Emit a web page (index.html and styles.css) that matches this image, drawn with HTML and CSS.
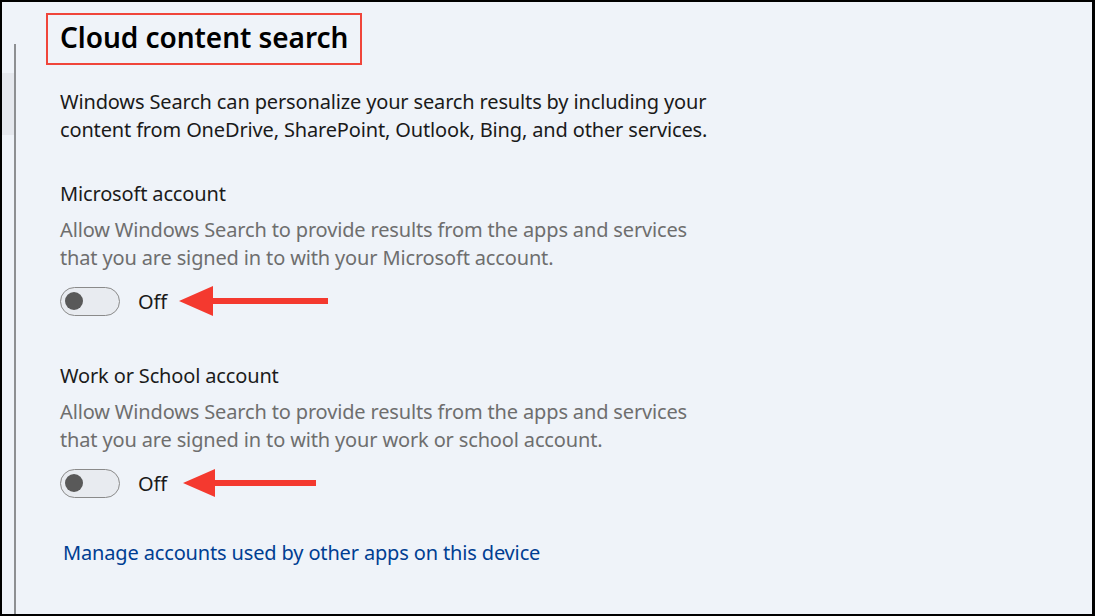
FILE: index.html
```html
<!DOCTYPE html>
<html lang="en">
<head>
<meta charset="utf-8">
<title>Cloud content search</title>
<link rel="stylesheet" href="styles.css">
</head>
<body>
<div class="frame">
  <div class="rail"><div class="rail-highlight"></div></div>
  <div class="divider"></div>
  <main class="content">
    <h1 class="heading">Cloud content search</h1>
    <p class="intro">Windows Search can personalize your search results by including your<br>content from OneDrive, SharePoint, Outlook, Bing, and other services.</p>

    <section class="setting first">
      <h2 class="label">Microsoft account</h2>
      <p class="desc">Allow Windows Search to provide results from the apps and services<br>that you are signed in to with your Microsoft account.</p>
      <div class="toggle-row">
        <span class="toggle"><span class="knob"></span></span>
        <span class="state">Off</span>
        <svg class="arrow a1" width="150" height="32" viewBox="0 0 150 32"><path d="M0 16 L34 1 L34 13 L149 13 L149 19 L34 19 L34 31 Z" fill="#f4392f"/></svg>
      </div>
    </section>

    <section class="setting second">
      <h2 class="label">Work or School account</h2>
      <p class="desc">Allow Windows Search to provide results from the apps and services<br>that you are signed in to with your work or school account.</p>
      <div class="toggle-row">
        <span class="toggle"><span class="knob"></span></span>
        <span class="state">Off</span>
        <svg class="arrow a2" width="134" height="32" viewBox="0 0 134 32"><path d="M0 16 L32 2 L32 13 L133 13 L133 19 L32 19 L32 30 Z" fill="#f4392f"/></svg>
      </div>
    </section>

    <a class="link" href="#">Manage accounts used by other apps on this device</a>
  </main>
</div>
</body>
</html>
```
FILE: styles.css
```css
* { box-sizing: border-box; }
html, body { margin: 0; padding: 0; }
body {
  font-family: "Noto Sans", "Open Sans", sans-serif;
  background: #000;
}
.frame {
  width: 1095px;
  height: 616px;
  border: 2px solid #000;
  border-right-width: 3px;
  background: #eff3f9;
  display: flex;
  overflow: hidden;
}
.rail {
  width: 12px;
  flex: none;
}
.rail-highlight {
  margin-top: 71px;
  height: 62px;
  background: #e5e8ee;
}
.divider {
  width: 2px;
  flex: none;
  margin-top: 42px;
  background: #8d8f92;
}
.content {
  flex: 1;
  padding-left: 30px;
  padding-top: 11px;
}
.heading {
  display: inline-block;
  margin: 0;
  border: 2px solid #f0453b;
  padding: 4px 12px 8px 12px;
  font-size: 28px;
  line-height: 36px;
  font-weight: 600;
  color: #000;
  letter-spacing: -0.05px;
}
.intro, .desc, .label {
  margin: 0;
  font-size: 20px;
  line-height: 28px;
  font-weight: 400;
  letter-spacing: -0.15px;
}
.intro {
  margin-top: 23px;
  padding-left: 14px;
  color: #1a1a1a;
}
.setting { padding-left: 14px; }
.setting.first { margin-top: 36px; }
.setting.second { margin-top: 46px; }
.label { color: #1b1b1b; }
.desc {
  margin-top: 8px;
  color: #6e6e6e;
}
.toggle-row {
  margin-top: 14px;
  height: 30px;
  display: flex;
  align-items: center;
}
.toggle {
  width: 60px;
  height: 29px;
  border: 1.5px solid #8a8a8a;
  border-radius: 15px;
  background: #e8ebf0;
  display: flex;
  align-items: center;
  padding-left: 4px;
  flex: none;
}
.knob {
  width: 18px;
  height: 18px;
  border-radius: 50%;
  background: #595959;
}
.state {
  margin-left: 18px;
  font-size: 20px;
  color: #1a1a1a;
  letter-spacing: -0.15px;
}
.arrow { flex: none; }
.a1 { margin-left: 12px; }
.a2 { margin-left: 16px; }
.link {
  display: block;
  margin-top: 41px;
  padding-left: 17px;
  font-size: 20px;
  line-height: 28px;
  color: #003e92;
  text-decoration: none;
  letter-spacing: -0.15px;
}
```
